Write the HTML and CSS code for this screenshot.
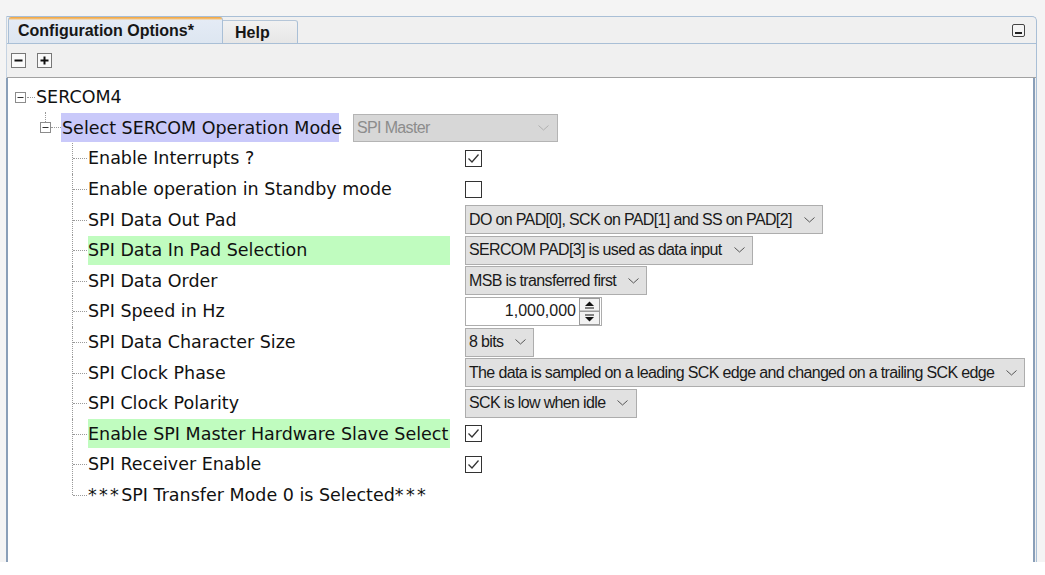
FILE: index.html
```html
<!DOCTYPE html>
<html>
<head>
<meta charset="utf-8">
<link rel="stylesheet" href="styles.css">
</head>
<body>
<div class="frame">
  <div class="window">
    <div class="tabstrip">
      <div class="tab active">Configuration Options*</div>
      <div class="tab">Help</div>
      <div class="minbtn"><svg width="13" height="13" viewBox="0 0 13 13"><rect x="0.5" y="0.5" width="12" height="12" rx="1.5" fill="#f4f4f4" stroke="#444"/><rect x="3" y="8" width="7" height="2" fill="#222"/></svg></div>
    </div>
    <div class="toolbar">
      <span class="tbtn"><svg width="15" height="15" viewBox="0 0 15 15"><rect x="0.5" y="0.5" width="14" height="14" fill="#fafafa" stroke="#777"/><rect x="3.5" y="6.5" width="8" height="2" fill="#111"/></svg></span>
      <span class="tbtn"><svg width="15" height="15" viewBox="0 0 15 15"><rect x="0.5" y="0.5" width="14" height="14" fill="#fafafa" stroke="#777"/><rect x="3.5" y="6.5" width="8" height="2" fill="#111"/><rect x="6.5" y="3.5" width="2" height="8" fill="#111"/></svg></span>
    </div>
    <div class="tree">
      <div class="row root">
        <span class="exp"><svg width="11" height="11" viewBox="0 0 11 11"><rect x="0.5" y="0.5" width="10" height="10" fill="#fff" stroke="#8c8c8c"/><rect x="2.5" y="5" width="6" height="1" fill="#333"/></svg></span>
        <span class="hdots root-dots"></span>
        <span class="txt">SERCOM4</span>
      </div>
      <div class="row lvl1">
        <span class="exp exp1"><svg width="11" height="11" viewBox="0 0 11 11"><rect x="0.5" y="0.5" width="10" height="10" fill="#fff" stroke="#8c8c8c"/><rect x="2.5" y="5" width="6" height="1" fill="#333"/></svg></span>
        <span class="hdots lvl1-dots"></span>
        <span class="lbl1 purple">Select SERCOM Operation Mode</span>
        <span class="combo disabled mode">SPI Master<svg class="chev" width="11" height="6" viewBox="0 0 11 6"><polyline points="0.5,0.5 5.5,5 10.5,0.5" fill="none" stroke="#b0b0b0"/></svg></span>
      </div>

      <div class="row child">
        <span class="conn"></span>
        <span class="lbl">Enable Interrupts ?</span>
        <span class="check"><svg width="17" height="17" viewBox="0 0 17 17"><rect x="0.5" y="0.5" width="16" height="16" fill="#fff" stroke="#333"/><polyline points="3.5,8.5 7,12 13.5,4.5" fill="none" stroke="#333" stroke-width="1.3"/></svg></span>
      </div>
      <div class="row child">
        <span class="conn"></span>
        <span class="lbl">Enable operation in Standby mode</span>
        <span class="check"><svg width="17" height="17" viewBox="0 0 17 17"><rect x="0.5" y="0.5" width="16" height="16" fill="#fff" stroke="#333"/></svg></span>
      </div>
      <div class="row child">
        <span class="conn"></span>
        <span class="lbl">SPI Data Out Pad</span>
        <span class="combo">DO on PAD[0], SCK on PAD[1] and SS on PAD[2]<svg class="chev" width="11" height="6" viewBox="0 0 11 6"><polyline points="0.5,0.5 5.5,5 10.5,0.5" fill="none" stroke="#555"/></svg></span>
      </div>
      <div class="row child">
        <span class="conn"></span>
        <span class="lbl green">SPI Data In Pad Selection</span>
        <span class="combo">SERCOM PAD[3] is used as data input<svg class="chev" width="11" height="6" viewBox="0 0 11 6"><polyline points="0.5,0.5 5.5,5 10.5,0.5" fill="none" stroke="#555"/></svg></span>
      </div>
      <div class="row child">
        <span class="conn"></span>
        <span class="lbl">SPI Data Order</span>
        <span class="combo">MSB is transferred first<svg class="chev" width="11" height="6" viewBox="0 0 11 6"><polyline points="0.5,0.5 5.5,5 10.5,0.5" fill="none" stroke="#555"/></svg></span>
      </div>
      <div class="row child">
        <span class="conn"></span>
        <span class="lbl">SPI Speed in Hz</span>
        <span class="spin"><span class="spin-val">1,000,000</span><span class="spin-btns"><svg width="21" height="27" viewBox="0 0 21 27"><rect x="0.5" y="0.5" width="20" height="12.5" fill="#f2f2f2" stroke="#9a9a9a"/><rect x="0.5" y="13.5" width="20" height="13" fill="#f2f2f2" stroke="#9a9a9a"/><polygon points="6,8 10.5,3.5 15,8" fill="#111"/><rect x="6" y="9.5" width="9" height="1" fill="#111"/><rect x="6" y="16.5" width="9" height="1" fill="#111"/><polygon points="6,19 10.5,23.5 15,19" fill="#111"/></svg></span></span>
      </div>
      <div class="row child">
        <span class="conn"></span>
        <span class="lbl">SPI Data Character Size</span>
        <span class="combo">8 bits<svg class="chev" width="11" height="6" viewBox="0 0 11 6"><polyline points="0.5,0.5 5.5,5 10.5,0.5" fill="none" stroke="#555"/></svg></span>
      </div>
      <div class="row child">
        <span class="conn"></span>
        <span class="lbl">SPI Clock Phase</span>
        <span class="combo">The data is sampled on a leading SCK edge and changed on a trailing SCK edge<svg class="chev" width="11" height="6" viewBox="0 0 11 6"><polyline points="0.5,0.5 5.5,5 10.5,0.5" fill="none" stroke="#555"/></svg></span>
      </div>
      <div class="row child">
        <span class="conn"></span>
        <span class="lbl">SPI Clock Polarity</span>
        <span class="combo wide">SCK is low when idle<svg class="chev" width="11" height="6" viewBox="0 0 11 6"><polyline points="0.5,0.5 5.5,5 10.5,0.5" fill="none" stroke="#555"/></svg></span>
      </div>
      <div class="row child">
        <span class="conn"></span>
        <span class="lbl green">Enable SPI Master Hardware Slave Select</span>
        <span class="check"><svg width="17" height="17" viewBox="0 0 17 17"><rect x="0.5" y="0.5" width="16" height="16" fill="#fff" stroke="#333"/><polyline points="3.5,8.5 7,12 13.5,4.5" fill="none" stroke="#333" stroke-width="1.3"/></svg></span>
      </div>
      <div class="row child">
        <span class="conn"></span>
        <span class="lbl">SPI Receiver Enable</span>
        <span class="check"><svg width="17" height="17" viewBox="0 0 17 17"><rect x="0.5" y="0.5" width="16" height="16" fill="#fff" stroke="#333"/><polyline points="3.5,8.5 7,12 13.5,4.5" fill="none" stroke="#333" stroke-width="1.3"/></svg></span>
      </div>
      <div class="row child last">
        <span class="conn"></span>
        <span class="lbl"><span class="stars">***</span>SPI Transfer Mode 0 is Selected<span class="stars">***</span></span>
      </div>
    </div>
  </div>
</div>
</body>
</html>
```

FILE: styles.css
```css
html, body {
  margin: 0;
  padding: 0;
  background: #ffffff;
}
body {
  width: 1045px;
  height: 575px;
  overflow: hidden;
}
.frame {
  height: 562px;
  background: #f4f4f4;
  padding: 16px 8px 0 6px;
  box-sizing: border-box;
}
.window {
  height: 546px;
  display: flex;
  flex-direction: column;
  background: #f0f0f0;
  border-top: 1px solid #a9bfd6;
  border-right: 1px solid #a9bfd6;
  border-left: 1px solid #c5d3e2;
  border-radius: 0 5px 0 0;
  box-sizing: border-box;
}
.tabstrip {
  height: 26px;
  display: flex;
  align-items: flex-end;
  border-bottom: 1px solid #a9bfd6;
  flex: none;
}
.tab {
  font-family: "Liberation Sans", Arial, sans-serif;
  font-weight: bold;
  font-size: 16px;
  color: #161616;
  box-sizing: border-box;
  display: flex;
  align-items: center;
}
.tab.active {
  margin-left: 1px;
  width: 215px;
  height: 26px;
  padding: 2px 0 0 9px;
  background: linear-gradient(#f0a23c 0, #f6c37a 2px, #e4ebf5 3px, #dde6f1 100%);
  border-left: 1px solid #a9bfd6;
  border-right: 1px solid #a9bfd6;
  border-radius: 3px 3px 0 0;
}
.tab:not(.active) {
  width: 75px;
  height: 23px;
  padding: 1px 0 0 12px;
  background: linear-gradient(#f1f1f1, #e6e6e6);
  border-top: 1px solid #b5c6d8;
  border-right: 1px solid #a9bfd6;
  border-radius: 0 3px 0 0;
}
.minbtn {
  margin-left: auto;
  margin-right: 11px;
  align-self: center;
  height: 13px;
  display: flex;
}
.toolbar {
  flex: none;
  height: 34px;
  display: flex;
  align-items: center;
  gap: 11px;
  padding-left: 4px;
  border-bottom: 1px solid #a2a2a2;
  box-sizing: border-box;
}
.tbtn {
  display: flex;
  width: 15px;
  height: 15px;
}
.tree {
  flex: 1;
  background: #ffffff;
  border-left: 2px solid #8a9fb8;
  border-right: 2px solid #8a9fb8;
  margin-left: -1px;
  margin-right: 1px;
  padding-top: 4px;
  box-sizing: border-box;
  font-family: "DejaVu Sans", Verdana, sans-serif;
  font-size: 17.5px;
  color: #111;
}
.row {
  height: 30.6px;
  display: flex;
  align-items: center;
}
.exp {
  display: flex;
  width: 11px;
  height: 11px;
  position: relative;
  flex: none;
}
.root .exp {
  margin-left: 7px;
}
.hdots {
  height: 0;
  border-top: 1px dotted #9a9a9a;
  flex: none;
}
.root-dots {
  width: 8px;
  margin: 0 1px 0 1px;
}
.txt {
  white-space: nowrap;
}
.lvl1 .exp1 {
  margin-left: 32px;
}
.exp1::before {
  content: "";
  position: absolute;
  left: 5px;
  bottom: 11px;
  height: 10px;
  border-left: 1px dotted #9a9a9a;
}
.lvl1-dots {
  width: 10px;
}
.lbl1 {
  height: 29px;
  width: 277px;
  padding-left: 1px;
  display: flex;
  align-items: center;
  white-space: nowrap;
  margin-right: 14px;
  flex: none;
}
.purple {
  background: #c9c9fa;
}
.conn {
  align-self: stretch;
  width: 16px;
  margin-left: 64px;
  position: relative;
  flex: none;
}
.conn::before {
  content: "";
  position: absolute;
  left: 0;
  top: 0;
  bottom: 0;
  border-left: 1px dotted #9a9a9a;
}
.last .conn::before {
  bottom: 50%;
}
.conn::after {
  content: "";
  position: absolute;
  left: 1px;
  right: 1px;
  top: 50%;
  border-top: 1px dotted #9a9a9a;
}
.lbl {
  width: 362px;
  height: 29px;
  display: flex;
  align-items: center;
  white-space: nowrap;
  margin-right: 15px;
  flex: none;
}
.stars {
  letter-spacing: 2.3px;
}
.green {
  background: #c0fcbf;
}
.check {
  display: flex;
  width: 17px;
  height: 17px;
  flex: none;
}
.combo {
  height: 29px;
  box-sizing: border-box;
  display: flex;
  align-items: center;
  padding: 0 7px 0 3px;
  border: 1px solid #adadad;
  background: #e1e1e1;
  font-family: "Liberation Sans", Arial, sans-serif;
  font-size: 16px;
  letter-spacing: -0.65px;
  color: #1a1a1a;
  white-space: nowrap;
  flex: none;
}
.combo .chev {
  margin-left: 12px;
  flex: none;
}
.combo.wide {
  width: 172px;
  justify-content: space-between;
  padding-right: 17px;
}
.combo.disabled {
  background: #d7d7d7;
  border-color: #b4b4b4;
  color: #8c8c8c;
  height: 28px;
  justify-content: space-between;
  padding-right: 8px;
}
.combo.mode {
  width: 205px;
}
.spin {
  width: 137px;
  height: 29px;
  box-sizing: border-box;
  border: 1px solid #adadad;
  background: #fff;
  display: flex;
  align-items: center;
  font-family: "Liberation Sans", Arial, sans-serif;
  font-size: 16px;
  color: #1a1a1a;
  flex: none;
}
.spin-val {
  flex: 1;
  text-align: right;
  padding-right: 3px;
}
.spin-btns {
  display: flex;
  width: 21px;
  height: 27px;
  margin-right: 1px;
}
```
